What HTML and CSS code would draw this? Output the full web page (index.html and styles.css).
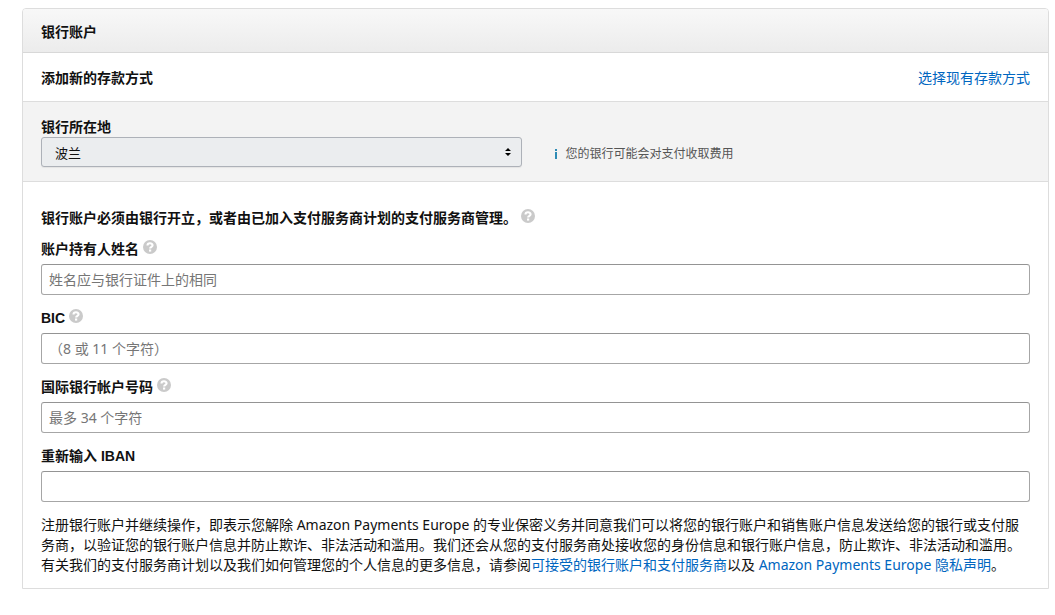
FILE: index.html
```html
<!DOCTYPE html>
<html lang="zh-CN">
<head>
<meta charset="utf-8">
<meta name="viewport" content="width=device-width, initial-scale=1">
<title>银行账户</title>
<link rel="stylesheet" href="styles.css">
</head>
<body>
<svg class="sprite" aria-hidden="true">
  <symbol id="help" viewBox="0 0 14 14">
    <circle cx="7" cy="7" r="7" fill="#cacaca"/>
    <path d="M4.5 5.4C4.5 2.6 9.6 2.6 9.6 5.3C9.6 6.8 7.1 6.8 7.1 8.6" fill="none" stroke="#fff" stroke-width="2.1"/>
    <rect x="6" y="9.5" width="2.2" height="2.1" fill="#fff"/>
  </symbol>
</svg>
<main class="card">
  <header class="card-header"><h1 class="title">银行账户</h1></header>
  <section class="method-row">
    <h2 class="title">添加新的存款方式</h2>
    <a class="link" href="#existing">选择现有存款方式</a>
  </section>
  <section class="location">
    <div class="location-field">
      <label class="label" for="country">银行所在地</label>
      <div class="select-wrap">
        <select class="select" id="country"><option>波兰</option></select>
        <svg class="select-arrows" viewBox="0 0 6 8" aria-hidden="true"><path d="M3 0L6 3H0ZM0 5H6L3 8Z"/></svg>
      </div>
    </div>
    <p class="hint">
      <svg class="info-icon" viewBox="0 0 4 10" aria-hidden="true"><path d="M1 0H3V2H1ZM1 3H3V10H1Z"/></svg>
      <span>您的银行可能会对支付收取费用</span>
    </p>
  </section>
  <form class="form">
    <div class="label-row notice">
      <p class="title">银行账户必须由银行开立，或者由已加入支付服务商计划的支付服务商管理。</p>
      <button class="help" type="button" aria-label="帮助"><svg class="help-icon"><use href="#help"/></svg></button>
    </div>
    <div class="field">
      <div class="label-row">
        <label class="label" for="holder">账户持有人姓名</label>
        <button class="help" type="button" aria-label="帮助"><svg class="help-icon"><use href="#help"/></svg></button>
      </div>
      <input class="input" id="holder" type="text" placeholder="姓名应与银行证件上的相同">
    </div>
    <div class="field">
      <div class="label-row">
        <label class="label" for="bic">BIC</label>
        <button class="help" type="button" aria-label="帮助"><svg class="help-icon"><use href="#help"/></svg></button>
      </div>
      <input class="input" id="bic" type="text" placeholder="（8 或 11 个字符）">
    </div>
    <div class="field">
      <div class="label-row">
        <label class="label" for="iban">国际银行帐户号码</label>
        <button class="help" type="button" aria-label="帮助"><svg class="help-icon"><use href="#help"/></svg></button>
      </div>
      <input class="input" id="iban" type="text" placeholder="最多 34 个字符">
    </div>
    <div class="field">
      <div class="label-row">
        <label class="label" for="iban2">重新输入 IBAN</label>
      </div>
      <input class="input" id="iban2" type="text">
    </div>
    <p class="terms">注册银行账户并继续操作，即表示您解除 Amazon Payments Europe 的专业保密义务并同意我们可以将您的银行账户和销售账户信息发送给您的银行或支付服务商，以验证您的银行账户信息并防止欺诈、非法活动和滥用。我们还会从您的支付服务商处接收您的身份信息和银行账户信息，防止欺诈、非法活动和滥用。有关我们的支付服务商计划以及我们如何管理您的个人信息的更多信息，请参阅<a class="link" href="#accepted">可接受的银行账户和支付服务商</a>以及 <a class="link" href="#privacy">Amazon Payments Europe 隐私声明</a>。</p>
  </form>
</main>
</body>
</html>
```
FILE: styles.css
```css
* {
  box-sizing: border-box;
}

body {
  margin: 0;
  padding: 8px 6px 26px 22px;
  background: #fff;
  color: #111;
  font: 14px/20px "Noto Sans", "Noto Sans CJK SC", sans-serif;
}

.sprite {
  display: none;
}

.card {
  border: 1px solid #ddd;
  border-radius: 4px 4px 0 0;
}

.card-header {
  padding: 13px 18px 10px;
  border-bottom: 1px solid #d8d8d8;
  border-radius: 3px 3px 0 0;
  background: linear-gradient(#f8f8f8, #ececec);
}

.title,
.label {
  margin: 0;
  font: bold 14px/20px "Liberation Sans", "Noto Sans CJK SC", sans-serif;
}

.link {
  color: #0066c0;
  text-decoration: none;
}

.method-row {
  display: flex;
  justify-content: space-between;
  padding: 15px 18px 13px;
  border-bottom: 1px solid #ddd;
}

.location {
  display: grid;
  grid-template-columns: 1fr 1fr;
  column-gap: 28px;
  align-items: end;
  padding: 15px 18px 14px;
  border-bottom: 1px solid #ddd;
  background: #f3f3f3;
}

.location-field .label {
  display: block;
}

.select-wrap {
  position: relative;
}

.select {
  display: block;
  width: 100%;
  height: 30px;
  padding: 1px 28px 0 13px;
  border: 1px solid #adb1b8;
  border-radius: 3px;
  appearance: none;
  background: #ebedef;
  box-shadow: 0 1px 1px #e4e4e4;
  color: #111;
  font: 13px/20px "Noto Sans", "Noto Sans CJK SC", sans-serif;
}

.select-arrows {
  position: absolute;
  top: 11px;
  right: 11px;
  width: 6px;
  height: 8px;
  pointer-events: none;
}

.hint {
  display: flex;
  align-items: center;
  gap: 8px;
  height: 26px;
  margin: 0 0 0 4px;
  color: #555;
  font-size: 12px;
}

.info-icon {
  width: 4px;
  height: 10px;
  fill: #2e8bb5;
}

.form {
  padding: 26px 18px 13px;
}

.label-row {
  display: flex;
  align-items: center;
  gap: 4px;
  height: 20px;
  margin-bottom: 5px;
}

.notice {
  margin-bottom: 11px;
}

.help {
  display: block;
  padding: 0 0 5px;
  border: 0;
  background: none;
}

.help-icon {
  display: block;
  width: 14px;
  height: 14px;
}

.field {
  margin-bottom: 13px;
}

.input {
  display: block;
  width: 100%;
  height: 31px;
  padding: 0 7px;
  border: 1px solid #a6a6a6;
  border-top-color: #949494;
  border-radius: 3px;
  background: #fff;
  color: #111;
  font: 14px/20px "Noto Sans", "Noto Sans CJK SC", sans-serif;
}

.input::placeholder {
  color: #767676;
}

.terms {
  margin: 0;
}
```
